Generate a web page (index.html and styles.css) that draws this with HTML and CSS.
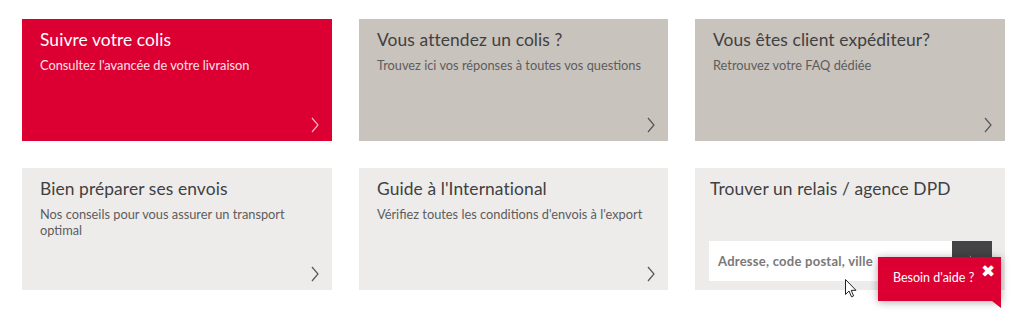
FILE: index.html
```html
<!DOCTYPE html>
<html lang="fr">
<head>
<meta charset="utf-8">
<link rel="stylesheet" href="styles.css">
</head>
<body>
<div class="grid">
  <a class="card red">
    <h2>Suivre votre colis</h2>
    <p>Consultez l'avancée de votre livraison</p>
    <svg class="chev" viewBox="0 0 8 16"><path d="M1 1 L7 8 L1 15"/></svg>
  </a>
  <a class="card beige">
    <h2>Vous attendez un colis ?</h2>
    <p>Trouvez ici vos réponses à toutes vos questions</p>
    <svg class="chev" viewBox="0 0 8 16"><path d="M1 1 L7 8 L1 15"/></svg>
  </a>
  <a class="card beige">
    <h2>Vous êtes client expéditeur?</h2>
    <p>Retrouvez votre FAQ dédiée</p>
    <svg class="chev" viewBox="0 0 8 16"><path d="M1 1 L7 8 L1 15"/></svg>
  </a>
  <a class="card light">
    <h2>Bien préparer ses envois</h2>
    <p>Nos conseils pour vous assurer un transport<br>optimal</p>
    <svg class="chev" viewBox="0 0 8 16"><path d="M1 1 L7 8 L1 15"/></svg>
  </a>
  <a class="card light">
    <h2>Guide à l'International</h2>
    <p>Vérifiez toutes les conditions d'envois à l'export</p>
    <svg class="chev" viewBox="0 0 8 16"><path d="M1 1 L7 8 L1 15"/></svg>
  </a>
  <div class="card light finder">
    <h2>Trouver un relais / agence DPD</h2>
    <form class="search">
      <span class="field">Adresse, code postal, ville</span>
      <span class="go"><svg viewBox="0 0 8 16"><path d="M1 1 L7 8 L1 15"/></svg></span>
    </form>
  </div>
</div>

<div class="help">
  <span class="help-text">Besoin d'aide ?</span>
  <span class="help-close">&#10006;</span>
</div>

<svg class="cursor" viewBox="0 0 12 19" width="12" height="19"><path d="M0.5 0.5 L0.5 15.5 L4 12 L6.5 17.8 L8.6 16.9 L6.2 11.3 L11 11.3 Z" fill="#fff" stroke="#222" stroke-width="1"/></svg>
</body>
</html>
```

FILE: styles.css
```css
* { box-sizing: border-box; }
html, body { margin: 0; padding: 0; background: #fff; }
body {
  font-family: Lato, "Open Sans", "Liberation Sans", sans-serif;
  width: 1024px;
  height: 315px;
  overflow: hidden;
  position: relative;
}
.grid {
  display: grid;
  grid-template-columns: 310px 309px 310px;
  grid-template-rows: 122px 122px;
  column-gap: 27px;
  row-gap: 27px;
  padding: 19px 0 0 22px;
}
.card {
  position: relative;
  display: block;
  padding: 11px 18px 0 18px;
  color: #414042;
  text-decoration: none;
}
.card h2 {
  margin: 0;
  font-size: 17.4px;
  line-height: 20px;
  font-weight: 400;
  letter-spacing: 0.1px;
}
.card p {
  margin: 8px 0 0 0;
  font-size: 12.8px;
  line-height: 15.5px;
  color: #5e5c5c;
}
.red { background: #dc0032; color: #fff; }
.red p { color: #fbe3e8; }
.beige { background: #c8c3bc; }
.light { background: #edeceb; }
.chev {
  position: absolute;
  right: 13px;
  bottom: 8px;
  width: 8px;
  height: 16px;
  fill: none;
  stroke: #56555a;
  stroke-width: 1.2;
}
.red .chev { stroke: #f3b3c1; }
.finder {
  padding: 11px 13px 9px 15px;
  display: flex;
  flex-direction: column;
}
.search {
  margin: auto 0 0 -1px;
  display: flex;
  height: 40px;
}
.field {
  flex: 1;
  background: #fff;
  font-size: 13px;
  font-weight: 700;
  letter-spacing: 0.25px;
  color: #7a7878;
  line-height: 40px;
  padding-left: 9px;
}
.go {
  width: 40px;
  background: #444446;
  display: flex;
  align-items: center;
  justify-content: center;
}
.go svg { width: 6px; height: 12px; fill: none; stroke: #aaa; stroke-width: 1.2; }
.help {
  position: absolute;
  left: 878px;
  top: 257px;
  width: 123px;
  height: 44px;
  background: #dc0032;
  box-shadow: 0 1px 8px rgba(0, 0, 0, 0.35);
  color: #fff;
}
.help::after {
  content: "";
  position: absolute;
  right: 0;
  top: 44px;
  border-top: 7px solid #dc0032;
  border-left: 9px solid transparent;
}
.help-text {
  position: absolute;
  left: 15px;
  top: 13px;
  font-size: 12.5px;
  line-height: 15px;
}
.help-close {
  position: absolute;
  left: 103px;
  top: 6px;
  font-family: "DejaVu Sans", sans-serif;
  font-size: 17px;
  font-weight: 700;
  line-height: 16px;
}
.cursor { position: absolute; left: 845px; top: 279px; }
```
